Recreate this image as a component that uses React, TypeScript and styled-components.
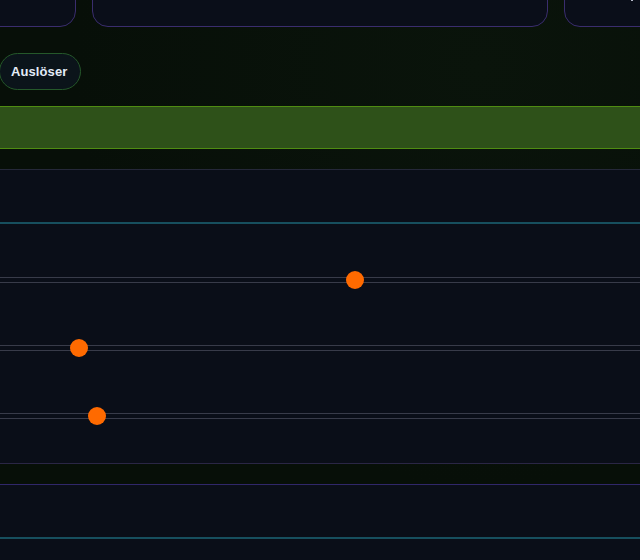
import React from 'react';
import styled, { createGlobalStyle } from 'styled-components';

const GlobalStyle = createGlobalStyle`
	html, body {
		margin: 0;
		padding: 0;
		overflow: hidden;
		background: #070f08;
		font-family: 'Liberation Sans', Arial, sans-serif;
	}
`;

const Page = styled.div`
	width: 640px;
	height: 560px;
	overflow: hidden;
	display: flex;
	flex-direction: column;
	background: radial-gradient( ellipse at 75% 12%, #0a140b 0%, #070f08 60% );
	& > * {
		flex-shrink: 0;
	}
`;

const CardRow = styled.div`
	display: grid;
	grid-template-columns: 96px 456px 96px;
	gap: 16px;
	margin: -34px -20px 0;
`;

const Card = styled.div`
	height: 59px;
	background: #0a0e19;
	border: 1px solid #3a2d6e;
	border-radius: 16px;
	position: relative;
`;

const Marker = styled.span`
	position: absolute;
	right: 26px;
	top: 30px;
	width: 2px;
	height: 4px;
	background: #b8bccc;
`;

const ActionRow = styled.div`
	display: flex;
	margin: 26px 0 0 -1px;
`;

const Pill = styled.button`
	height: 37px;
	padding: 0 13px 0 11px;
	border-radius: 19px;
	border: 1px solid #25582a;
	background: #0b141a;
	color: #e3ecf8;
	font: bold 13px 'Liberation Sans', Arial, sans-serif;
	letter-spacing: 0.1px;
`;

const Banner = styled.div`
	margin-top: 16px;
	height: 41px;
	background: #2e5119;
	border-top: 1px solid #4f8c12;
	border-bottom: 1px solid #4f8c12;
`;

const Panel = styled.section< { $top: string; $bottom?: string } >`
	margin-top: 20px;
	background: #0a0e18;
	border-top: 1px solid ${ ( p ) => p.$top };
	border-bottom: ${ ( p ) => ( p.$bottom ? `1px solid ${ p.$bottom }` : 'none' ) };
`;

const PanelHead = styled.div`
	height: 52px;
	border-bottom: 2px solid #174f5e;
`;

const PanelBody = styled.div`
	display: flex;
	flex-direction: column;
	padding: 22px 0 13px;
`;

const SliderRow = styled.div`
	height: 68px;
	display: flex;
	align-items: center;
`;

const Track = styled.div`
	position: relative;
	width: 100%;
	height: 4px;
	border-top: 1px solid #383b49;
	border-bottom: 1px solid #383b49;
`;

const Thumb = styled.span`
	position: absolute;
	top: 50%;
	width: 18px;
	height: 18px;
	margin: -9px 0 0 -9px;
	border-radius: 50%;
	background: #ff6a00;
`;

const sliders = [ 0.5563, 0.1125, 0.1415 ];

const Slider = ( { value }: { value: number } ) => (
	<SliderRow>
		<Track>
			<Thumb style={ { left: `${ 9 + value * 622 }px` } } />
		</Track>
	</SliderRow>
);

export default function App() {
	return (
		<>
			<GlobalStyle />
			<Page>
				<CardRow>
					<Card />
					<Card />
					<Card>
						<Marker />
					</Card>
				</CardRow>
				<ActionRow>
					<Pill>Auslöser</Pill>
				</ActionRow>
				<Banner />
				<Panel $top="#252839" $bottom="#2a2645">
					<PanelHead />
					<PanelBody>
						{ sliders.map( ( v, i ) => (
							<Slider key={ i } value={ v } />
						) ) }
					</PanelBody>
				</Panel>
				<Panel $top="#30276a">
					<PanelHead />
					<PanelBody />
				</Panel>
			</Page>
		</>
	);
}
